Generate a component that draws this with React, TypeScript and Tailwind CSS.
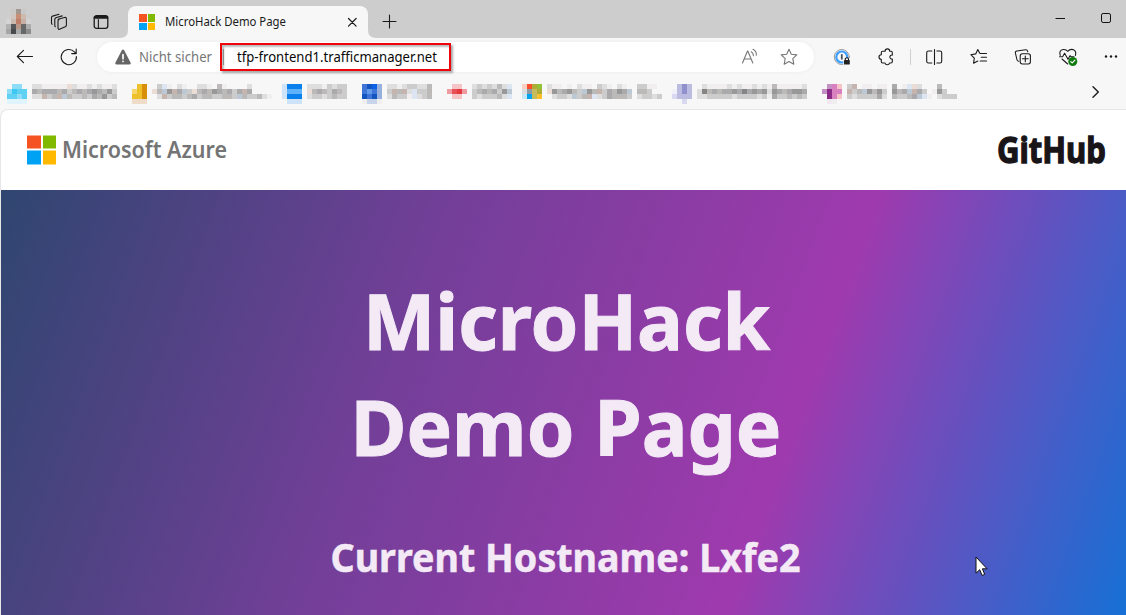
import React from "react";

const INK = "#1b1b1b";

type Mosaic = { rows: string[]; x: number };

const swatches: Record<string, string> = {
  a: "#f0eeee", b: "#dedede", c: "#cccccc", d: "#bcbab9", e: "#aaaaad", f: "#989898", g: "#858585",
  p: "#ecdcd6", q: "#c6b4ae", s: "#bcc8d4", t: "#dce6f2",
  "1": "#dff4fc", "2": "#8edcf7", "3": "#60d0f3", "4": "#3cc8f2",
  "5": "#f7d66a", "6": "#eec12c", "7": "#d88f0c", "8": "#efdcc8",
  "9": "#0a80ec", B: "#5fb2fa", C: "#cfe3f8", D: "#b4c9ec",
  E: "#1355c0", F: "#3f74d8", G: "#0b60e8", u: "#c8d4ea", v: "#98b0dc", w: "#6098ea",
  H: "#f4c4c6", I: "#ee9aa0", J: "#e85058", K: "#e53940",
  L: "#f8502a", M: "#b0ac38", N: "#92c13c", O: "#00a2f2", P: "#c4bc5e", Q: "#fdbf2c", R: "#8e99a4", S: "#c8e8f8", T: "#fbd0c4",
  U: "#f0f0f8", V: "#bcbce0", W: "#9090cc", X: "#d8d8f0",
  Y: "#c490c4", Z: "#8c2c88", y: "#d880c0", z: "#f2e8f2",
};

const mosaics: Mosaic[] = [
  { x: 7, rows: [".22.", "2433", "3323", "1111"] },
  { x: 32, rows: ["bbaaaaapbaababaab", "edeeedecdedefedfc", "bbqcdqsdccdcedfcd"] },
  { x: 132, rows: [".67", "567", "667", "888"] },
  { x: 152, rows: [".cta.ba..bba.da....b....", "pdsfqescpdedfedeceqe....", ".bqcddcdecddccddcsdccdba"] },
  { x: 282, rows: ["C999", "CBBB", "C999", ".CCC"] },
  { x: 307, rows: ["bbbacbcc", "pdedcedc", "bccbcdcc"] },
  { x: 362, rows: ["FEGv", "FwFv", "EFEv", "auua"] },
  { x: 387, rows: ["bbabccbbd", "cqdqbtccd", "bdccatbcd"] },
  { x: 447, rows: [".HH.", "IJKI", ".HH."] },
  { x: 472, rows: ["bcbcbdbt", "cdedecfs", "cbcccdbt"] },
  { x: 522, rows: ["TLMN", "bRPM", "SOPQ"] },
  { x: 547, rows: ["baa.a.baa.cba.ba..ccaa.", "pfdefdcsfdqcedfes.ddc..", ".bccbscdqtbcedddc.bccbc"] },
  { x: 672, rows: [".VWV", "UVWV", "XVVV", "..X."] },
  { x: 697, rows: [".baaaababaababadaaaaab", "bgdedeefegefefbfedeffe", "bbcccccbccccbcaeccdcdc"] },
  { x: 822, rows: [".YyH", "YZyy", ".ZyH", ".za."] },
  { x: 847, rows: ["cq.aa.aa.e.atpb...d...", "qcdsfdfc.fdesqec.afc..", "cbcccceb.dccdesta.bccc"] },
];

const MosaicBlock = ({ m }: { m: Mosaic }) => (
  <g>
    {m.rows.map((row, r) =>
      row.split("").map((k, c) =>
        k === "." ? null : (
          <rect key={r + "-" + c} x={m.x + c * 5} y={r * 5} width={5} height={5} fill={swatches[k]} />
        ),
      ),
    )}
  </g>
);

const Logo = ({ className, gap }: { className: string; gap: string }) => (
  <span className={"grid shrink-0 grid-cols-2 grid-rows-2 " + className + " " + gap}>
    <i className="bg-[#f65323]" /><i className="bg-[#80b900]" />
    <i className="bg-[#00a3f3]" /><i className="bg-[#ffb900]" />
  </span>
);

const Icon = ({ children, className, stroke = INK }: { children: React.ReactNode; className: string; stroke?: string }) => (
  <svg viewBox="0 0 20 20" fill="none" stroke={stroke} strokeWidth="1.1" strokeLinecap="round" strokeLinejoin="round" className={"block h-5 w-5 shrink-0 " + className}>
    {children}
  </svg>
);

const avatar = [
  ["#cdcdcd", "#cbcac9", "#a3978f", "#c8c8c8", "#cdcdcd"],
  ["#cecece", "#d1c6bf", "#c98f75", "#cdbbb0", "#cccccc"],
  ["#d5d5d5", "#c9b9ae", "#bf7e67", "#c8afa5", "#d3d3d3"],
  ["#b2b2b2", "#555758", "#b99787", "#686868", "#acacac"],
  ["#a5a5a5", "#484b4d", "#a9a9a9", "#66696b", "#8d8d8d"],
];

export default function App() {
  return (
    <div className="flex h-[615px] w-[1126px] flex-col overflow-hidden bg-[#f7f7f7] font-['Noto_Sans','Open_Sans',sans-serif] text-[#1b1b1b]">
      <header className="flex h-[38px] shrink-0 bg-[#cdcdcd]">
        <svg viewBox="0 0 25 25" className="mt-[9px] ml-[6px] h-[25px] w-[25px] shrink-0" shapeRendering="crispEdges">
          {avatar.map((row, r) => row.map((c, i) => <rect key={r + "-" + i} x={i * 5} y={r * 5} width="5" height="5" fill={c} />))}
        </svg>
        <Icon className="mt-3 ml-[18px]">
          <path d="M9.2 7.3 15.4 5.5q1.7-.5 2 1.1v6.3q0 1.3-1.1 1.8L11 17.1q-1.8.8-2-1.1V9.1q0-1.1 1-1.5Z" />
          <path d="M6.3 14.7q-.5-.4-.5-1.2V7.4q0-1.2 1.1-1.6L13.2 3.9M3.1 12.3q-.6-.4-.6-1.2V5.8q0-1.2 1.1-1.7L10 2.3" />
        </Icon>
        <Icon className="mt-3 ml-[22px]">
          <rect x="3.2" y="3.7" width="13.6" height="12.6" rx="2.3" strokeWidth="1.3" />
          <path d="M4 5.4h12" strokeWidth="2.6" /><path d="M7.4 7.5v8.5" />
        </Icon>
        <div className="relative ml-[17px] flex h-8 w-60 translate-y-[6px] items-center rounded-t-lg bg-[#f7f7f7] pl-[11px]">
          <svg className="absolute bottom-0 -left-2 h-2 w-2" viewBox="0 0 8 8"><path fill="#f7f7f7" d="M8 0v8H0q8 0 8-8" /></svg>
          <svg className="absolute -right-2 bottom-0 h-2 w-2" viewBox="0 0 8 8"><path fill="#f7f7f7" d="M0 0v8h8Q0 8 0 0" /></svg>
          <Logo className="h-4 w-4" gap="gap-px" />
          <span className="ml-[10px] w-[177px]"><svg className="block h-5 w-[124px] overflow-visible"><text x="0" y="14" textLength="121" lengthAdjust="spacingAndGlyphs" fill={INK} fontSize="12">MicroHack Demo Page</text></svg></span>
          <Icon className=""><path d="m6.5 6.5 7.6 7.6m0-7.6-7.6 7.6" strokeWidth="1.2" /></Icon>
        </div>
        <Icon className="mt-3 ml-3 -translate-x-[.5px] -translate-y-[.5px]"><path d="M10 3.5v13M3.5 10h13" /></Icon>
        <svg viewBox="0 0 60 20" fill="none" stroke="#111" className="mt-2 ml-auto h-5 w-[60px] shrink-0 -translate-x-[11px]">
          <path d="M.5 10.5H10" /><rect x="46.5" y="5.5" width="9" height="9" rx="1.6" />
        </svg>
      </header>

      <div className="flex h-[38px] shrink-0 items-center">
        <Icon className="ml-[15px]"><path d="M17.5 9.5H2.3M8.5 3.3 2.3 9.5l6.2 6.2" /></Icon>
        <Icon className="ml-6"><path d="M17.4 9.5a7.6 7.6 0 1 1-2-4.6l1.7 1.6M17.2 2.1v4.5h-4.5" /></Icon>
        <div className="ml-[18px] flex h-[30px] w-[717px] shrink-0 items-center rounded-full bg-white shadow-[0_0_4px_#0000000d]">
          <svg viewBox="0 0 18 17" className="ml-[17px] h-[17px] w-[18px]"><path fill="#666" d="M7.7 1.5Q9-.5 10.3 1.5l6.2 12q.8 2-1.2 2H2.7q-2 0-1.2-2Z" /><path stroke="#fff" strokeWidth="1.7" strokeLinecap="round" d="M9 5.5v4.2M9 12.3v.1" /></svg>
          <svg className="ml-[7px] h-5 w-[76px] overflow-visible"><text x="0" y="15" fontSize="13.5" fill="#767676" textLength="73" lengthAdjust="spacingAndGlyphs">Nicht sicher</text></svg>
          <div className="-mt-px ml-[5px] flex h-7 w-[231px] items-center border-2 border-[#ee0509] shadow-[2px_2px_2px_#0005,inset_2px_2px_2px_#0004]">
            <i className="ml-px h-4 w-px bg-[#8c8c8c]" />
            <svg className="ml-[13px] h-5 w-[202px] overflow-visible"><text x="0" y="15" fontSize="13.5" fill="#080808" textLength="200" lengthAdjust="spacingAndGlyphs">tfp-frontend1.trafficmanager.net</text></svg>
          </div>
          <Icon className="ml-[289px]" stroke="#767676"><path d="m2.5 16 5-12h.3l5 12M4.2 12h7M11.2 4.8q2.2 1 2.2 4M13 2.3q3.8 2 3.3 6" /></Icon>
          <Icon className="ml-[19px]" stroke="#767676"><path d="m10 2.2 2.3 5 5.5.7-4 3.8 1 5.5-4.8-2.7-4.8 2.7 1-5.5-4-3.8 5.5-.7Z" /></Icon>
        </div>
        <Icon className="ml-[18px]"><circle cx="9.8" cy="10" r="7.5" stroke="#999" strokeWidth="1" /><circle cx="9.8" cy="10" r="5.5" stroke="#3d9fff" strokeWidth="2.2" /><path d="M9.8 7.8v4" strokeWidth="1.8" stroke="#4b5360" /><path d="M11.3 11h7v7.5h-7z" stroke="none" fill="#f7f7f7" /><rect x="12" y="13" width="5.8" height="4.5" rx=".6" fill="#222" stroke="none" /><path d="M13.3 13v-1.4q1.6-1.6 3.2 0V13" /></Icon>
        <Icon className="ml-6"><path d="M6.5 4.2h2.6a2.3 2.3 0 0 1 4.6 0H15q1.3 0 1.3 1.2v2.7a2 2 0 1 0 0 3.9v2.8q0 1.2-1.3 1.2h-1.5a2.3 2.3 0 0 1-4.5 0H6.6q-1.3 0-1.3-1.2v-2.4a2.3 2.3 0 1 1 0-4.6V5.4q0-1.2 1.2-1.2Z" /></Icon>
        <i className="ml-[14px] h-4 w-px bg-[#cfcfcf]" />
        <Icon className="ml-[13px]"><path d="M7.8 4H4.5Q2.7 4 2.7 5.8v8.4Q2.7 16 4.5 16h3.3M12.9 4h3q1.8 0 1.8 1.8v8.4q0 1.8-1.8 1.8h-3M10.5 2.5v15" /></Icon>
        <Icon className="ml-[25px]"><path d="m10.6 6.1-1.8-3.5-2.1 4.3-4.9.8 3.5 3.5-.7 5 4.2-2.1M11.3 6.5h6.2M12.2 10.3h5.3M11.2 14h6.3" /></Icon>
        <Icon className="ml-6"><path d="M14.7 4.8v-.5q-.4-1.7-2.2-1.5L4 4q-1.9.3-1.6 2l1.5 6.5q.3 1.6 1.7 1.8" /><rect x="7.2" y="6.7" width="10.2" height="10.3" rx="2.2" /><path d="M12.3 9v5.7M9.4 11.8h5.8" /></Icon>
        <Icon className="ml-[25px]"><path d="M2.2 8.4q-1.5-5.2 3-5.9 3-.3 4.5 1.8Q12 1.8 15 2.6q3.8 1.5 2.4 5.8M4 12l5.7 5M1.6 9.8h3l2-3.5 3.4 6 2-3.6 1 1h3" /><circle cx="14.8" cy="14.5" r="4.5" fill="#117b11" stroke="none" /><path d="m12.8 14.6 1.4 1.3 2.8-2.8" stroke="white" /></Icon>
        <Icon className="ml-[23px]"><g fill={INK} stroke="none"><circle cx="5" cy="9.5" r="1.2" /><circle cx="10" cy="9.5" r="1.2" /><circle cx="15" cy="9.5" r="1.2" /></g></Icon>
      </div>

      <nav className="flex h-[33px] shrink-0 items-start">
        <svg className="mt-2 h-5 w-[1070px] shrink-0" shapeRendering="crispEdges">
          {mosaics.map((m) => <MosaicBlock key={m.x} m={m} />)}
        </svg>
        <Icon className="mt-[6px] ml-[15px]"><path d="m8 4.7 5.3 5.3L8 15.3" strokeWidth="1.4" /></Icon>
      </nav>

      <main className="flex min-h-0 flex-1 flex-col overflow-hidden rounded-tl-lg border-t border-l border-[#e7e7e7] bg-white">
        <div className="flex h-20 shrink-0 items-center pl-[26px]">
          <Logo className="h-[29px] w-[29px] -translate-y-[.5px]" gap="gap-[2px]" />
          <svg className="ml-[6px] h-10 w-[168px] overflow-visible"><text x="0" y="28" fontSize="24" fontWeight="600" fill="#747474" textLength="165" lengthAdjust="spacingAndGlyphs">Microsoft Azure</text></svg>
          <svg className="ml-auto h-16 w-[129px] overflow-visible"><text x="0" y="45" fontSize="36" fontWeight="700" fill="#181418" stroke="#181418" strokeWidth="1.3" textLength="109" lengthAdjust="spacingAndGlyphs">GitHub</text></svg>
        </div>
        <section className="relative flex min-h-0 flex-1 flex-col items-center bg-[linear-gradient(110deg,#2f4670_0%,#723f98_35%,#9f3aae_68.6%,#1670d5_100%)]">
          <svg viewBox="0 0 1125 424" className="h-[424px] w-[1125px] shrink-0" fill="#f3eaf6" stroke="#f3eaf6" fontWeight="700">
            <text x="362" y="159.5" fontSize="77.5" strokeWidth="1" textLength="407" lengthAdjust="spacingAndGlyphs">MicroHack</text>
            <text x="349.5" y="265.5" fontSize="77.5" strokeWidth="1" textLength="431" lengthAdjust="spacingAndGlyphs">Demo Page</text>
            <text x="329.5" y="382" fontSize="39" strokeWidth=".5" textLength="470" lengthAdjust="spacingAndGlyphs">Current Hostname: Lxfe2</text>
          </svg>
          <svg viewBox="0 0 13 21" className="absolute top-[366px] left-[974px] h-[21px] w-[13px]"><path fill="white" stroke="#111" d="M1 1v16.2l3.7-3.5 2.4 5.7 2.6-1-2.3-5.6h4.7Z" /></svg>
        </section>
      </main>
    </div>
  );
}
